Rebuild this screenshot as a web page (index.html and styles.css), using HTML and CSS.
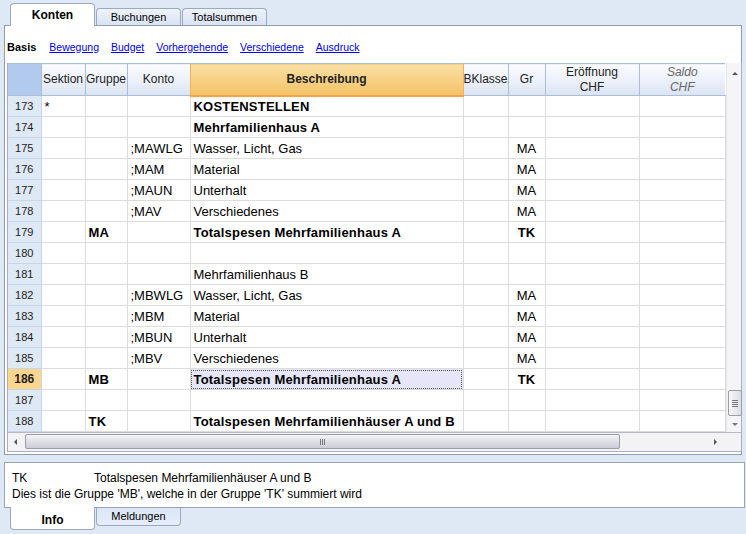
FILE: index.html
```html
<!DOCTYPE html>
<html lang="de">
<head>
    <meta charset="UTF-8">
    <title>Konten</title>
    <link rel="stylesheet" href="styles.css">
</head>
<body>
    <div class="tabs top-tabs">
        <div class="tab active">Konten</div>
        <div class="tab">Buchungen</div>
        <div class="tab">Totalsummen</div>
    </div>

    <div class="panel">
        <div class="views">
            <b>Basis</b>
            <a href="#">Bewegung</a>
            <a href="#">Budget</a>
            <a href="#">Vorhergehende</a>
            <a href="#">Verschiedene</a>
            <a href="#">Ausdruck</a>
        </div>

        <div class="grid-box">
            <div class="grid-main">
                <table class="grid">
                    <colgroup>
                        <col style="width:33px"><col style="width:44px"><col style="width:42px">
                        <col style="width:63px"><col style="width:273px"><col style="width:45px">
                        <col style="width:37px"><col style="width:94px"><col style="width:86px">
                    </colgroup>
                    <thead>
                        <tr>
                            <th class="corner"></th>
                            <th>Sektion</th>
                            <th>Gruppe</th>
                            <th>Konto</th>
                            <th class="sorted">Beschreibung</th>
                            <th>BKlasse</th>
                            <th>Gr</th>
                            <th>Eröffnung<br>CHF</th>
                            <th class="calc">Saldo<br>CHF</th>
                        </tr>
                    </thead>
                    <tbody>
                        <tr><td class="num">173</td><td>*</td><td></td><td></td><td class="b">KOSTENSTELLEN</td><td></td><td></td><td></td><td></td></tr>
                        <tr><td class="num">174</td><td></td><td></td><td></td><td class="b">Mehrfamilienhaus A</td><td></td><td></td><td></td><td></td></tr>
                        <tr><td class="num">175</td><td></td><td></td><td>;MAWLG</td><td>Wasser, Licht, Gas</td><td></td><td class="c">MA</td><td></td><td></td></tr>
                        <tr><td class="num">176</td><td></td><td></td><td>;MAM</td><td>Material</td><td></td><td class="c">MA</td><td></td><td></td></tr>
                        <tr><td class="num">177</td><td></td><td></td><td>;MAUN</td><td>Unterhalt</td><td></td><td class="c">MA</td><td></td><td></td></tr>
                        <tr><td class="num">178</td><td></td><td></td><td>;MAV</td><td>Verschiedenes</td><td></td><td class="c">MA</td><td></td><td></td></tr>
                        <tr><td class="num">179</td><td></td><td class="b">MA</td><td></td><td class="b">Totalspesen Mehrfamilienhaus A</td><td></td><td class="c b">TK</td><td></td><td></td></tr>
                        <tr><td class="num">180</td><td></td><td></td><td></td><td></td><td></td><td></td><td></td><td></td></tr>
                        <tr><td class="num">181</td><td></td><td></td><td></td><td>Mehrfamilienhaus B</td><td></td><td></td><td></td><td></td></tr>
                        <tr><td class="num">182</td><td></td><td></td><td>;MBWLG</td><td>Wasser, Licht, Gas</td><td></td><td class="c">MA</td><td></td><td></td></tr>
                        <tr><td class="num">183</td><td></td><td></td><td>;MBM</td><td>Material</td><td></td><td class="c">MA</td><td></td><td></td></tr>
                        <tr><td class="num">184</td><td></td><td></td><td>;MBUN</td><td>Unterhalt</td><td></td><td class="c">MA</td><td></td><td></td></tr>
                        <tr><td class="num">185</td><td></td><td></td><td>;MBV</td><td>Verschiedenes</td><td></td><td class="c">MA</td><td></td><td></td></tr>
                        <tr class="current"><td class="num">186</td><td></td><td class="b">MB</td><td></td><td class="b focus">Totalspesen Mehrfamilienhaus A</td><td></td><td class="c b">TK</td><td></td><td></td></tr>
                        <tr><td class="num">187</td><td></td><td></td><td></td><td></td><td></td><td></td><td></td><td></td></tr>
                        <tr><td class="num">188</td><td></td><td class="b">TK</td><td></td><td class="b">Totalspesen Mehrfamilienhäuser A und B</td><td></td><td></td><td></td><td></td></tr>
                    </tbody>
                </table>
                <div class="vscroll">
                    <span class="arrow up"></span>
                    <span class="vthumb"><i></i><i></i><i></i><i></i></span>
                    <span class="arrow down"></span>
                </div>
            </div>
            <div class="hscroll">
                <span class="arrow left"></span>
                <span class="hthumb"><i></i><i></i><i></i></span>
                <span class="arrow right"></span>
            </div>
        </div>
    </div>

    <div class="info">
        <div class="info-line"><span class="info-key">TK</span>Totalspesen Mehrfamilienhäuser A und B</div>
        <div class="info-line">Dies ist die Gruppe 'MB', welche in der Gruppe 'TK' summiert wird</div>
    </div>

    <div class="tabs bottom-tabs">
        <div class="tab active">Info</div>
        <div class="tab">Meldungen</div>
    </div>
</body>
</html>
```

FILE: styles.css
```css
body {
    margin: 0;
    background-color: #dfe9f5;
    font-family: "Liberation Sans", Arial, sans-serif;
    font-size: 12px;
    color: #000;
    width: 746px;
    height: 534px;
    overflow: hidden;
}

/* tab strips */
.tabs {
    display: flex;
    padding-left: 10px;
}

.top-tabs {
    height: 25px;
    align-items: flex-end;
    position: relative;
    z-index: 2;
}

.tab {
    box-sizing: border-box;
    width: 85px;
    height: 17px;
    margin-right: 1px;
    border: 1px solid #9daabd;
    background: linear-gradient(#eef3fb, #d9e3f4);
    font-size: 11px;
    text-align: center;
    line-height: 16px;
}

.top-tabs .tab {
    border-bottom: none;
    border-radius: 4px 4px 0 0;
}

.top-tabs .tab.active {
    height: 23px;
    margin-bottom: -1px;
    background: #fff;
    font-weight: bold;
    font-size: 12px;
    line-height: 22px;
}

.bottom-tabs .tab {
    border-top: none;
    border-radius: 0 0 4px 4px;
    height: 18px;
    background: linear-gradient(#dae5f8, #e7eefb);
    line-height: 16px;
}

.bottom-tabs .tab.active {
    height: 23px;
    margin-top: -1px;
    background: #fff;
    font-weight: bold;
    font-size: 12px;
    line-height: 26px;
}

/* main panel */
.panel {
    box-sizing: border-box;
    margin: 0 4px 0 4px;
    height: 430px;
    border: 1px solid #8f9cad;
    background: #fff;
    padding-left: 2px;
}

.views {
    height: 37px;
    display: flex;
    align-items: center;
    font-size: 10.5px;
    padding-top: 4px;
    box-sizing: border-box;
}

.views b {
    font-size: 11px;
    margin-right: 13px;
}

.views a {
    color: #0000ee;
    margin-right: 12px;
}

.grid-box {
    box-sizing: border-box;
    width: 735px;
    border: 1px solid #a7b0bd;
    border-top: none;
}

.grid-main {
    display: flex;
}

/* the grid */
.grid {
    border-collapse: collapse;
    table-layout: fixed;
    width: 717px;
}

.grid th {
    height: 32px;
    box-sizing: border-box;
    padding: 0;
    font-weight: normal;
    color: #222;
    background: linear-gradient(#fbfcff, #e9eef9 60%, #dbe3f2);
    border-left: 1px solid #a9bdd6;
    border-bottom: 1px solid #a9bdd6;
    border-top: 1px solid #a9bdd6;
    line-height: 15px;
    white-space: nowrap;
    overflow: hidden;
}

.grid th.corner {
    background: #b2caed;
    border-left: none;
}

.grid th.sorted {
    font-weight: bold;
    background: linear-gradient(#fae0a6, #f4c264);
    border-bottom: 2px solid #f3a44a;
    border-left-color: #f2b25a;
    border-right: 1px solid #f2b25a;
}

.grid th.calc {
    font-style: italic;
    color: #666;
}

.grid td {
    height: 21px;
    box-sizing: border-box;
    padding: 1px 3px 0 3px;
    border: 1px solid #dcdcdc;
    border-top: none;
    font-size: 13px;
    white-space: nowrap;
    overflow: hidden;
}

.grid td.num {
    background: #dfe8f5;
    border-color: #c7d6ea;
    border-left: none;
    font-size: 11px;
    text-align: center;
    color: #222;
    padding: 0;
}

.grid tr.current td.num {
    background: #fcd68d;
    font-weight: bold;
    font-size: 12px;
}

.grid td.b {
    font-weight: bold;
    letter-spacing: 0.2px;
}

.grid td.c {
    text-align: center;
}

.grid td.focus {
    background: #e6e6f8;
    outline: 1px dotted #555;
    outline-offset: -2px;
}

/* scrollbars */
.vscroll {
    width: 16px;
    background: #f5f4f7;
    border-left: 1px solid #e4e4ea;
    position: relative;
}

.arrow {
    position: absolute;
    width: 0;
    height: 0;
    border: 3px solid transparent;
}

.arrow.up {
    top: 9px;
    left: 5px;
    border-bottom-color: #555;
    border-top-width: 0;
}

.arrow.down {
    bottom: 6px;
    left: 5px;
    border-top-color: #777;
    border-bottom-width: 0;
}

.arrow.left {
    top: 6px;
    left: 6px;
    border-right-color: #555;
    border-left-width: 0;
}

.arrow.right {
    top: 6px;
    right: 24px;
    border-left-color: #555;
    border-right-width: 0;
}

.vthumb {
    position: absolute;
    left: 1px;
    top: 327px;
    width: 12px;
    height: 24px;
    border: 1px solid #9a9ca6;
    border-radius: 2px;
    background: linear-gradient(90deg, #f8f8fa, #dddee4);
    display: flex;
    flex-direction: column;
    align-items: center;
    justify-content: center;
    gap: 1px;
}

.vthumb i {
    width: 6px;
    height: 1px;
    background: #777;
}

.hscroll {
    height: 18px;
    background: #f3f3f5;
    border-top: 1px solid #b7bac2;
    position: relative;
}

.hthumb {
    position: absolute;
    left: 17px;
    top: 1px;
    width: 593px;
    height: 13px;
    border: 1px solid #9a9ca6;
    border-radius: 2px;
    background: linear-gradient(#f4f4f7, #dcdde3 60%, #cbccd4);
    display: flex;
    justify-content: center;
    align-items: center;
    gap: 1px;
}

.hthumb i {
    width: 1px;
    height: 6px;
    background: #777;
}

/* info box */
.info {
    box-sizing: border-box;
    margin: 7px 1px 0 4px;
    height: 46px;
    border: 1px solid #9aa3ae;
    background: #fff;
    padding: 7px 0 0 7px;
}

.info-line {
    line-height: 16px;
}

.info-key {
    display: inline-block;
    width: 82px;
}
```
